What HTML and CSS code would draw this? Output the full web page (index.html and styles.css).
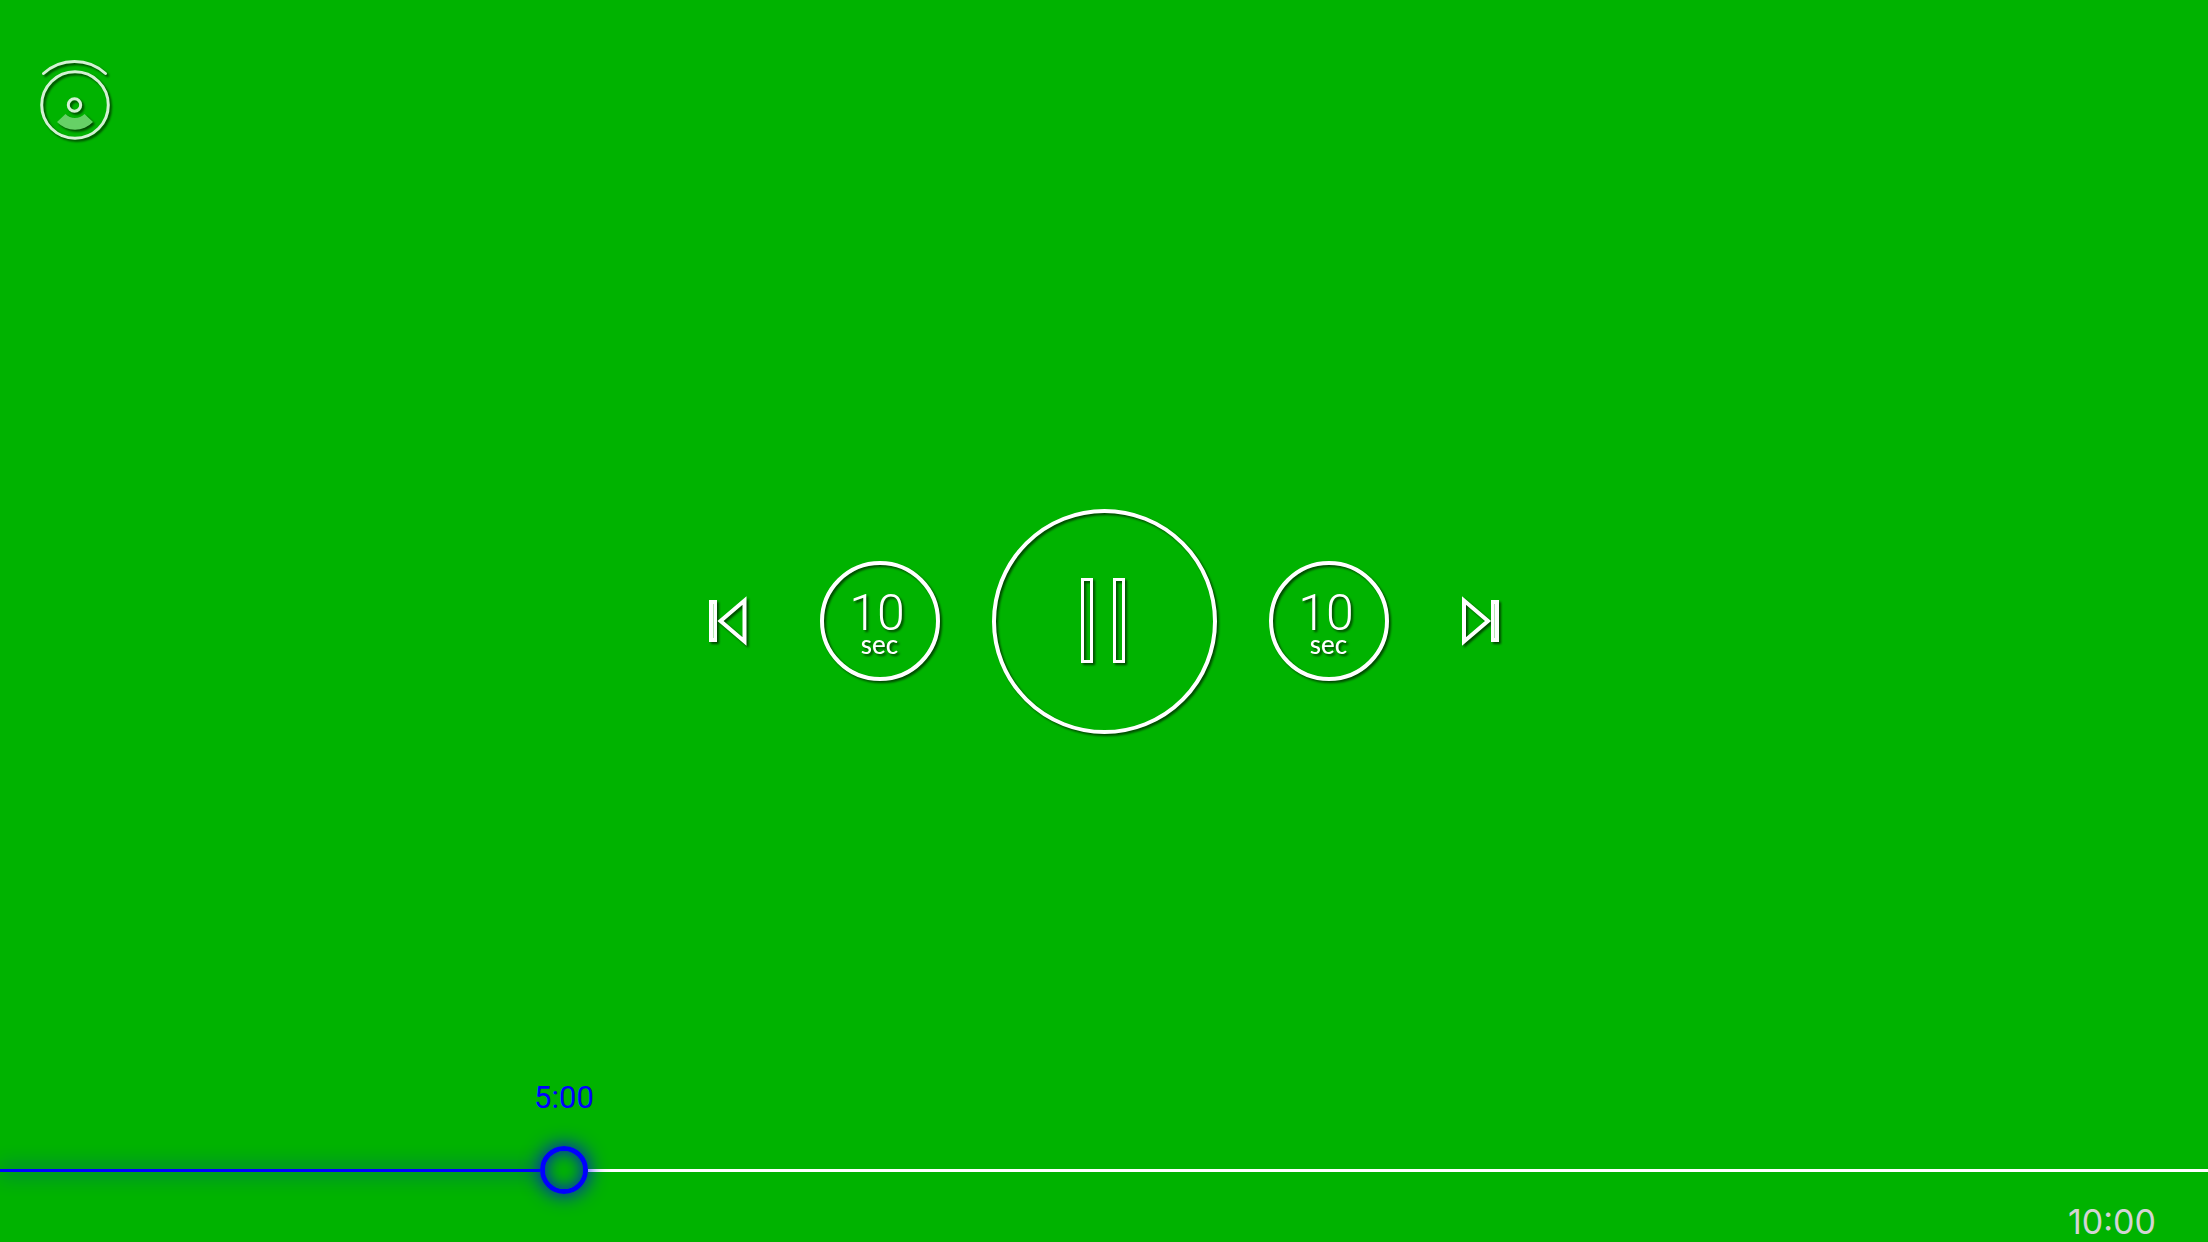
FILE: index.html
```html
<!DOCTYPE html>
<html lang="en">
<head>
<meta charset="utf-8">
<meta name="viewport" content="width=device-width, initial-scale=1">
<title>Video player</title>
<link rel="stylesheet" href="styles.css">
</head>
<body>
<main class="player">
  <header class="top-bar">
    <button class="control" type="button" aria-label="Recenter view">
      <svg class="icon" width="56" height="64" viewBox="0 0 56 64" fill="none" stroke="#d4f2d4" stroke-width="3">
        <path d="M-3.500 13.500A46 46 0 0 1 58.500 13.500" stroke-linecap="round"/>
        <circle cx="28" cy="45" r="33.300"/>
        <circle cx="27.500" cy="45" r="6.200"/>
        <path d="M18.500 54A13.500 13.500 0 0 0 37.500 54L46 62A25 25 0 0 1 10 62Z" fill="#66d166" stroke="none"/>
      </svg>
    </button>
  </header>

  <div class="controls">
    <button class="control skip" type="button" aria-label="Previous">
      <svg class="icon" width="38" height="52" viewBox="0 0 38 52" fill="none" stroke="#fff">
        <path d="M0 5H8V47H0Z" fill="#fff" stroke="none"/>
        <path d="M4.500 9V43" stroke="#b3e6b3"/>
        <path d="M35.500 5.500V46.500L11.500 26Z" stroke-width="4"/>
      </svg>
    </button>
    <button class="control seek" type="button" aria-label="Back 10 seconds"><span class="amount">10</span><span class="unit">sec</span></button>
    <button class="control pause" type="button" aria-label="Pause">
      <svg class="icon" width="47" height="87" viewBox="0 0 47 87" fill="none" stroke="#fff" stroke-width="3">
        <rect x="1.500" y="1.500" width="9" height="82"/>
        <rect x="33.500" y="1.500" width="9" height="82"/>
      </svg>
    </button>
    <button class="control seek" type="button" aria-label="Forward 10 seconds"><span class="amount">10</span><span class="unit">sec</span></button>
    <button class="control skip" type="button" aria-label="Next">
      <svg class="icon" width="38" height="52" viewBox="0 0 38 52" fill="none" stroke="#fff">
        <path d="M29 5H37V47H29Z" fill="#fff" stroke="none"/>
        <path d="M32.500 9V43" stroke="#b3e6b3"/>
        <path d="M2 5.500V46.500L26 26Z" stroke-width="4"/>
      </svg>
    </button>
  </div>

  <footer class="timeline" style="--progress: 25%">
    <output class="elapsed" for="seek">5:00</output>
    <div class="scrubber">
      <div class="played"></div>
      <input class="range" id="seek" type="range" min="0" max="100" value="25" aria-label="Seek">
    </div>
    <div class="duration">10:00</div>
  </footer>
</main>
</body>
</html>
```
FILE: styles.css
```css
* {
  box-sizing: border-box;
}

body {
  margin: 0;
  background: #00b300;
  color: #fff;
}

/* Header, controls and timeline share one cell, each aligned to its own edge. */
.player {
  display: grid;
  grid-template: 1fr / 1fr;
  min-height: 100vh;
  overflow: hidden;
}

.player > * {
  grid-area: 1 / 1;
}

.top-bar {
  align-self: start;
  justify-self: start;
  padding: 60px 47px;
}

.control {
  display: flex;
  align-items: center;
  justify-content: center;
  padding: 0;
  border: 0;
  background: none;
  color: inherit;
  cursor: pointer;
}

.icon {
  display: block;
  overflow: visible;
  filter: drop-shadow(2px 2px 1px rgba(0, 0, 0, 0.6));
}

.controls {
  align-self: center;
  justify-self: center;
  display: flex;
  align-items: center;
  gap: 52px;
}

.skip {
  width: 80px;
  height: 80px;
}

.seek,
.pause {
  border: 4px solid #fff;
  border-radius: 50%;
  filter: drop-shadow(2px 2px 1px rgba(0, 0, 0, 0.6));
}

.seek {
  flex-direction: column;
  width: 120px;
  height: 120px;
}

.pause {
  width: 225px;
  height: 225px;
}

.pause .icon {
  filter: none;
}

.amount {
  padding: 8px 5px 0 0;
  font: 300 50px/38px Roboto, sans-serif;
}

.unit {
  font: 500 26px/24px Lato, sans-serif;
}

.timeline {
  align-self: end;
  position: relative;
}

.elapsed {
  position: absolute;
  bottom: 100%;
  left: calc(var(--progress) + 12px);
  transform: translateX(-50%);
  padding-bottom: 31px;
  color: #00f;
  font: 400 31px/34px Roboto, sans-serif;
}

.scrubber {
  display: grid;
  align-items: center;
}

.scrubber > * {
  grid-area: 1 / 1;
}

.played {
  width: calc(var(--progress) - 12px);
  height: 3px;
  background: #00f;
  box-shadow: 0 0 20px #00f;
}

.range {
  appearance: none;
  width: 100%;
  height: 48px;
  margin: 0;
  background: none;
  cursor: pointer;
}

.range::-webkit-slider-runnable-track {
  height: 48px;
  background: linear-gradient(90deg, transparent calc(var(--progress) + 36px), #fff 0) center / 100% 3px no-repeat;
}

.range::-webkit-slider-thumb {
  appearance: none;
  width: 48px;
  height: 48px;
  border: 5px solid #00f;
  border-radius: 50%;
  box-shadow: 0 0 20px #00f, inset 0 0 16px rgba(0, 0, 255, 0.8);
}

.duration {
  padding: 7px 52px 0;
  color: #d4d4d4;
  font: 400 34px/41px Inter, sans-serif;
  text-align: right;
}
```
